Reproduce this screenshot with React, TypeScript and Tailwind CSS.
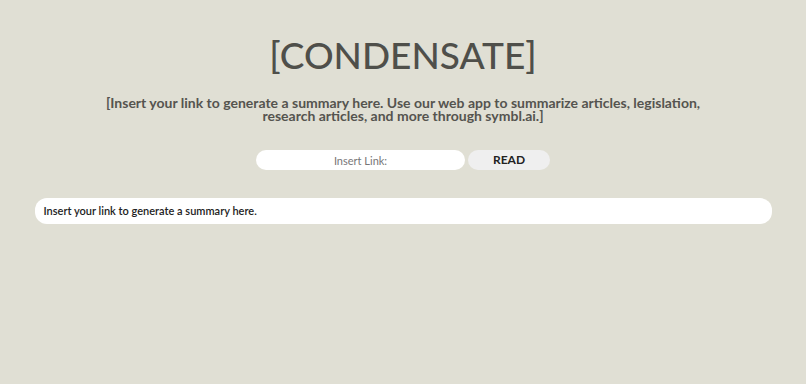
export default function App() {
  return (
    <div className="w-[806px] h-[384px] bg-[#e0dfd4] flex flex-col items-center" style={{ fontFamily: 'Lato, "Noto Sans", sans-serif' }}>
      <h1 className="mt-[35px] text-[37px] leading-[40px] font-medium text-[#4f4f4a]">[CONDENSATE]</h1>
      <p className="mt-[21px] w-[612px] text-center text-[14px] leading-[13px] font-bold text-[#55544f]">
        [Insert your link to generate a summary here. Use our web app to summarize articles, legislation, research articles, and more through symbl.ai.]
      </p>
      <div className="mt-[28px] flex gap-[3px]">
        <input placeholder="Insert Link:" className="w-[209px] h-[20px] rounded-full bg-white text-center text-[11px] outline-none placeholder:text-[#777]" />
        <button className="w-[82px] h-[20px] rounded-full bg-[#efefef] text-[12px] font-bold text-[#222]">READ</button>
      </div>
      <div className="mt-[28px] w-[737px] h-[26px] rounded-[12px] bg-white flex items-center px-[9px] text-[11px] font-semibold text-[#222]">
        Insert your link to generate a summary here.
      </div>
    </div>
  );
}
